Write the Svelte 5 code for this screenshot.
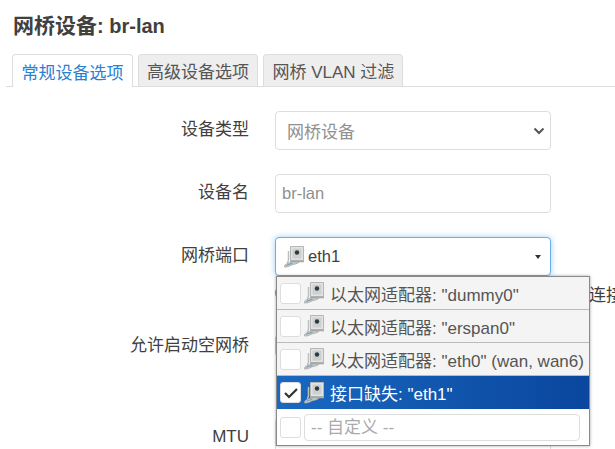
<script>
  const ports = [
    { name: '以太网适配器', rest: ': "dummy0"' },
    { name: '以太网适配器', rest: ': "erspan0"' },
    { name: '以太网适配器', rest: ': "eth0" (wan, wan6)' },
    { name: '接口缺失', rest: ': "eth1"', selected: true }
  ];
  const tabs = [
    { label: '常规设备选项', active: true },
    { label: '高级设备选项' },
    { label: '网桥 VLAN 过滤' }
  ];
</script>

{#snippet portIcon()}
  <svg class="port" width="20" height="22" viewBox="0 0 20 22" aria-hidden="true">
    <path d="M6.500.5h13v14h-13z" fill="#e2e4e4" stroke="#b4b6b6" />
    <path d="M8.500 2.500h9v10h-9z" fill="#cdd0d0" />
    <circle cx="13" cy="6.500" r="2.200" fill="#2e3a3c" />
    <path d="M6 14.500h14v1.800h-14z" fill="#a8abab" />
    <path d="M4.500 5v9l-1 3" fill="none" stroke="#bcbebe" stroke-width="1.500" />
    <path d="M.5 21c-.5-3 3-3.500 5.500-4.500s6-.2 9-.6c-1.500 2.300-4.500 2-7 3s-4.500 2.500-7.500 2.100z" fill="#c9ccca" stroke="#a0a4a2" stroke-width=".7" />
    <path d="M2.500 19.500c2-1.600 4-1.300 6-2.200" fill="none" stroke="#6a9abc" stroke-width="1" />
  </svg>
{/snippet}

<div class="page">
  <h3><span class="zh">网桥设备</span>: br-lan</h3>

  <ul class="tabs">
    {#each tabs as t}
      <li class:active={t.active}>{t.label}</li>
    {/each}
  </ul>

  <div class="form">
    <div class="row">
      <div class="label">设备类型</div>
      <div class="field select">
        网桥设备
        <svg class="chev" width="12" height="8" viewBox="0 0 12 8" aria-hidden="true">
          <path d="M1.500 1.500 6 6l4.500-4.500" fill="none" stroke="#555" stroke-width="2" />
        </svg>
      </div>
    </div>

    <div class="row">
      <div class="label">设备名</div>
      <div class="field text">br-lan</div>
    </div>

    <div class="row combo-row">
      <div class="label">网桥端口</div>
      <div class="combo-wrap">
        <div class="field combo">
          {@render portIcon()}
          <span>eth1</span>
          <i class="caret"></i>
        </div>
        <div class="help"><b class="dot"></b><span class="help-text">指定要附加到此网桥设备的以太网接口或连接的无线网络</span></div>

        <ul class="dropdown">
          {#each ports as p}
            <li class:selected={p.selected}>
              <span class="check">
                {#if p.selected}
                  <svg width="16" height="12" viewBox="0 0 16 12" aria-hidden="true">
                    <path d="M2 6l4 4 8-8" fill="none" stroke="#333" stroke-width="2.200" />
                  </svg>
                {/if}
              </span>
              {@render portIcon()}
              <span class="opt">{p.name}{p.rest}</span>
            </li>
          {/each}
          <li class="custom">
            <span class="check"></span>
            <span class="custom-input">-- 自定义 --</span>
          </li>
        </ul>
      </div>
    </div>

    <div class="row empty-row">
      <div class="label">允许启动空网桥</div>
      <span class="check flag"></span>
    </div>

    <div class="row mtu-row">
      <div class="label">MTU</div>
      <div class="field text mtu"></div>
    </div>
  </div>
</div>

<style>
  :global(body) {
    margin: 0;
    background: #fff;
    overflow: hidden;
  }

  .page {
    width: 615px;
    height: 449px;
    overflow: hidden;
    box-sizing: border-box;
    padding-top: 14px;
    font-family: "Liberation Sans", "Noto Sans CJK SC", sans-serif;
    font-size: 17px;
    color: #404040;
  }

  h3 {
    margin: 0 0 0 13px;
    font-size: 20px;
    line-height: 23px;
    font-weight: 700;
    color: #404040;
  }

  .zh {
    font-size: 21px;
  }

  .tabs {
    display: flex;
    gap: 5px;
    list-style: none;
    margin: 16px 0 0 6px;
    padding: 0 0 0 6px;
    height: 32px;
    border-bottom: 1px solid #ddd;
  }

  .tabs li {
    box-sizing: border-box;
    height: 32px;
    padding: 0 8px 0 8.500px;
    display: flex;
    align-items: center;
    font-size: 17px;
    color: #555;
    background: #eee;
    border: 1px solid #ddd;
    border-bottom: 0;
    border-radius: 4px 4px 0 0;
    white-space: nowrap;
  }

  .tabs li.active {
    height: 33px;
    color: #2b80d0;
    background: #fff;
  }

  .form {
    padding-top: 24px;
  }

  .row {
    display: flex;
    align-items: flex-start;
    height: 39px;
    margin-bottom: 24px;
  }

  .label {
    width: 249px;
    flex: none;
    text-align: right;
    font-size: 17px;
    line-height: 37px;
    color: #404040;
  }

  .field {
    box-sizing: border-box;
    width: 276px;
    height: 39px;
    margin-left: 26px;
    border: 1px solid #ddd;
    border-radius: 4px;
    font-size: 17px;
    color: #909090;
    display: flex;
    align-items: center;
    background: #fff;
  }

  .select {
    padding-left: 11px;
    justify-content: space-between;
    padding-right: 5px;
  }

  .text {
    padding-left: 6px;
    font-size: 16.500px;
  }

  .combo-wrap {
    position: relative;
    margin-left: 26px;
    width: 276px;
  }

  .combo {
    margin-left: 0;
    padding-left: 5px;
    gap: 4px;
    font-size: 16.500px;
    color: #404040;
    border-color: #66afe9;
    box-shadow: 0 0 6px rgba(102, 175, 233, .6);
  }

  .caret {
    margin-left: auto;
    margin-right: 9px;
    border: 3px solid transparent;
    border-top: 4px solid #333;
    border-bottom: 0;
  }

  .help {
    display: flex;
    align-items: center;
    height: 20px;
    margin-top: 7px;
    font-size: 17px;
    white-space: nowrap;
    color: #404040;
  }

  .dot {
    width: 8px;
    height: 16px;
    flex: none;
    background: #5b9bd5;
    border-radius: 8px 0 0 8px;
  }

  .dropdown {
    position: absolute;
    left: 1px;
    top: 39px;
    width: 314px;
    box-sizing: border-box;
    margin: 0;
    padding: 0;
    list-style: none;
    background: #fff;
    border: 1px solid #8a8a8a;
    box-shadow: 0 0 3px rgba(0, 0, 0, .35);
    z-index: 2;
  }

  .dropdown li {
    box-sizing: border-box;
    height: 33px;
    display: flex;
    align-items: center;
    padding-left: 3px;
    background: #f4f4f4;
    border-bottom: 1px solid #bbb;
    font-size: 17px;
    white-space: nowrap;
    color: #555;
  }

  .dropdown li.selected {
    background: linear-gradient(90deg, #1a68c0, #0a469e);
    color: #fff;
    border-bottom: 0;
  }

  .dropdown li.custom {
    height: 36px;
    background: #fff;
    border-bottom: 0;
  }

  .check {
    box-sizing: border-box;
    width: 21px;
    height: 21px;
    flex: none;
    border: 1px solid #ddd;
    border-radius: 3px;
    background: #fff;
    display: flex;
    align-items: center;
    justify-content: center;
  }

  .flag {
    margin: 8px 0 0 26px;
    border-color: #ccc;
  }

  .port {
    flex: none;
    margin: 0 0 0 3px;
  }

  .opt {
    margin-left: 6px;
  }

  .custom-input {
    box-sizing: border-box;
    width: 276px;
    height: 27px;
    margin-left: 3px;
    padding-left: 6px;
    border: 1px solid #ddd;
    border-radius: 4px;
    color: #aaa;
    line-height: 25px;
    background: #fff;
  }

  .combo-row {
    height: 85px;
    margin-bottom: 0;
  }

  .empty-row {
    height: 39px;
    margin-top: 5px;
    margin-bottom: 0;
  }

  .mtu-row {
    margin-top: 52px;
  }
</style>
